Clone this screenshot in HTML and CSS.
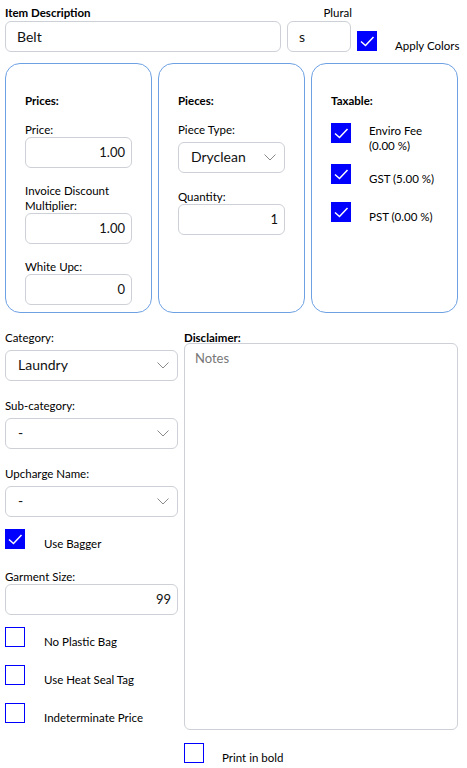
FILE: index.html
```html
<!DOCTYPE html>
<html lang="en">
<head>
<meta charset="utf-8">
<title>Item</title>
<link rel="stylesheet" href="styles.css">
</head>
<body>
<div class="page">
  <div class="top">
    <div class="field desc">
      <div class="lbl bold">Item Description</div>
      <div class="input text">Belt</div>
    </div>
    <div class="field plural">
      <div class="lbl plural-lbl">Plural</div>
      <div class="input text">s</div>
    </div>
    <div class="check-row apply">
      <span class="cb checked"><svg viewBox="0 0 20 20" width="20" height="20"><path d="M4 10.5 L8.5 14.5 L16.5 6" /></svg></span>
      <span class="cb-text">Apply Colors</span>
    </div>
  </div>

  <div class="panels">
    <div class="panel">
      <div class="lbl bold title">Prices:</div>
      <div class="lbl first">Price:</div>
      <div class="input num">1.00</div>
      <div class="lbl gap">Invoice Discount<br>Multiplier:</div>
      <div class="input num">1.00</div>
      <div class="lbl gap">White Upc:</div>
      <div class="input num">0</div>
    </div>
    <div class="panel">
      <div class="lbl bold title">Pieces:</div>
      <div class="lbl first">Piece Type:</div>
      <div class="input select piece">Dryclean<svg class="chev" viewBox="0 0 12 7" width="12" height="7"><path d="M0.5 0.5 L6 6 L11.5 0.5"/></svg></div>
      <div class="lbl gap qty">Quantity:</div>
      <div class="input num">1</div>
    </div>
    <div class="panel">
      <div class="lbl bold title">Taxable:</div>
      <div class="tax-row first-row">
        <span class="cb checked"><svg viewBox="0 0 20 20" width="20" height="20"><path d="M4 10.5 L8.5 14.5 L16.5 6" /></svg></span>
        <span class="tax-text">Enviro Fee<br>(0.00 %)</span>
      </div>
      <div class="tax-row second-row">
        <span class="cb checked"><svg viewBox="0 0 20 20" width="20" height="20"><path d="M4 10.5 L8.5 14.5 L16.5 6" /></svg></span>
        <span class="tax-text low">GST (5.00 %)</span>
      </div>
      <div class="tax-row third-row">
        <span class="cb checked"><svg viewBox="0 0 20 20" width="20" height="20"><path d="M4 10.5 L8.5 14.5 L16.5 6" /></svg></span>
        <span class="tax-text low">PST (0.00 %)</span>
      </div>
    </div>
  </div>

  <div class="lower">
    <div class="col-left">
      <div class="lbl">Category:</div>
      <div class="input select">Laundry<svg class="chev" viewBox="0 0 12 7" width="12" height="7"><path d="M0.5 0.5 L6 6 L11.5 0.5"/></svg></div>
      <div class="lbl sect">Sub-category:</div>
      <div class="input select">-<svg class="chev" viewBox="0 0 12 7" width="12" height="7"><path d="M0.5 0.5 L6 6 L11.5 0.5"/></svg></div>
      <div class="lbl sect">Upcharge Name:</div>
      <div class="input select">-<svg class="chev" viewBox="0 0 12 7" width="12" height="7"><path d="M0.5 0.5 L6 6 L11.5 0.5"/></svg></div>
      <div class="check-row bagger">
        <span class="cb checked"><svg viewBox="0 0 20 20" width="20" height="20"><path d="M4 10.5 L8.5 14.5 L16.5 6" /></svg></span>
        <span class="cb-text">Use Bagger</span>
      </div>
      <div class="lbl garment">Garment Size:</div>
      <div class="input num">99</div>
      <div class="check-row opt">
        <span class="cb"></span>
        <span class="cb-text">No Plastic Bag</span>
      </div>
      <div class="check-row opt2">
        <span class="cb"></span>
        <span class="cb-text">Use Heat Seal Tag</span>
      </div>
      <div class="check-row opt2">
        <span class="cb"></span>
        <span class="cb-text">Indeterminate Price</span>
      </div>
    </div>
    <div class="col-right">
      <div class="lbl bold disc">Disclaimer:</div>
      <div class="textarea"><span class="placeholder">Notes</span></div>
      <div class="check-row bold-row">
        <span class="cb"></span>
        <span class="cb-text">Print in bold</span>
      </div>
    </div>
  </div>
</div>
</body>
</html>
```
FILE: styles.css
```css
* { box-sizing: border-box; }
html, body { margin: 0; padding: 0; background: #ffffff; }
body {
  font-family: Lato, "Noto Sans", sans-serif;
  color: #000;
  font-size: 11.5px;
}
.page { width: 453px; margin-left: 5px; padding-top: 5px; }

.lbl { font-size: 11.5px; line-height: 15px; color: #000; }
.bold { font-weight: 700; }

.top { display: flex; align-items: flex-end; gap: 6px; }
.field { display: flex; flex-direction: column; }
.desc { width: 276px; flex: 0 0 276px; }
.plural { width: 64px; flex: 0 0 64px; }
.plural-lbl { text-align: right; margin-right: -1px; }
.field .input { margin-top: 1px; }

.input {
  height: 31px;
  border: 1px solid #cdd0d6;
  border-radius: 6px;
  background: #fff;
  display: flex;
  align-items: center;
  color: #111;
}
.input.text { font-size: 14px; padding-left: 11px; padding-bottom: 1px; }
.input.num { font-size: 13px; justify-content: flex-end; padding-right: 6px; padding-bottom: 1px; }
.input.select { font-size: 14px; padding-left: 12px; padding-right: 8px; padding-bottom: 2px; justify-content: space-between; margin-top: 5px; }
.chev { fill: none; stroke: #8a8a8a; stroke-width: 1; margin-top: 2px; }

.cb {
  width: 20px; height: 20px;
  flex: 0 0 20px;
  border: 1.5px solid #0000ff;
  background: #fff;
  display: block;
}
.cb.checked { background: #0000ff; border: none; }
.cb svg { display: block; fill: none; stroke: #fff; stroke-width: 1.5; }

.check-row { display: flex; align-items: flex-end; gap: 19px; }
.cb-text { font-size: 11.5px; line-height: 15px; margin-bottom: -2px; color: #000; white-space: nowrap; }
.apply { margin-bottom: 1px; gap: 18px; flex: 0 0 auto; }

.panels {
  display: grid;
  grid-template-columns: repeat(3, 147px);
  gap: 6px;
  margin-top: 11px;
}
.panel {
  height: 250px;
  border: 1px solid #6ea1e4;
  border-radius: 15px;
  padding: 29px 19px 0 19px;
  display: flex;
  flex-direction: column;
}
.lbl.first { margin-top: 14px; }
.lbl.gap { margin-top: 15px; }
.lbl.qty { margin-top: 16px; }

.tax-row { display: flex; align-items: flex-start; gap: 18px; }
.tax-text { font-size: 11.5px; line-height: 15px; color: #000; }
.tax-text.low { margin-top: 7px; }
.first-row { margin-top: 15px; }
.second-row { margin-top: 11px; }
.third-row { margin-top: 16px; }

.lower {
  display: grid;
  grid-template-columns: 173px 274px;
  gap: 6px;
  margin-top: 17px;
}
.col-left, .col-right { display: flex; flex-direction: column; }
.lbl.sect { margin-top: 17px; }
.bagger { margin-top: 12px; }
.garment { margin-top: 20px; }
.opt { margin-top: 12px; }
.opt2 { margin-top: 18px; }

.disc { margin-bottom: -2px; }
.textarea {
  height: 387px;
  border: 1px solid #cdd0d6;
  border-radius: 6px;
  padding: 6px 10px;
}
.placeholder { font-size: 13px; color: #777; }
.bold-row { margin-top: 13px; gap: 18px; }
```
